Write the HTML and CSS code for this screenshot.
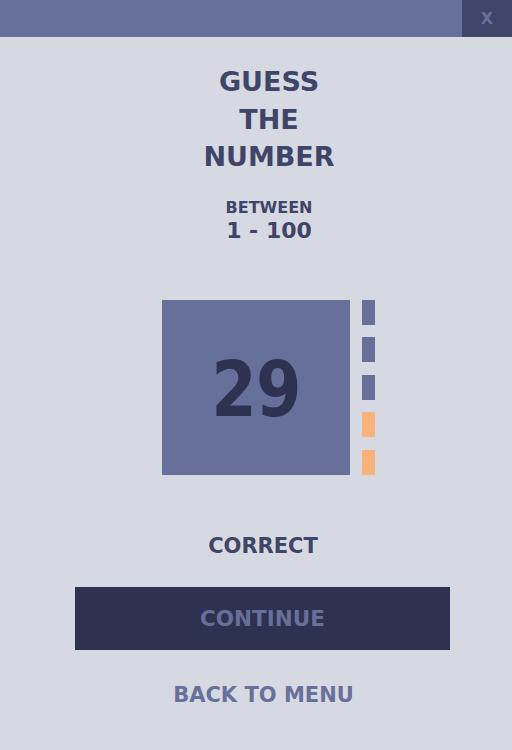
FILE: index.html
```html
<!DOCTYPE html>
<html>
<head>
<meta charset="utf-8">
<link rel="stylesheet" href="styles.css">
</head>
<body>
<div class="topbar">
  <div class="close">X</div>
</div>
<main class="content">
  <h1 class="title">GUESS<br>THE<br>NUMBER</h1>
  <div class="range">
    <div class="between">BETWEEN</div>
    <div class="nums">1 - 100</div>
  </div>
  <div class="game">
    <div class="numbox"><span class="digits">29</span></div>
    <div class="bars">
      <div class="bar"></div>
      <div class="bar"></div>
      <div class="bar"></div>
      <div class="bar hot"></div>
      <div class="bar hot"></div>
    </div>
  </div>
  <div class="status">CORRECT</div>
  <button class="continue">CONTINUE</button>
  <div class="back">BACK TO MENU</div>
</main>
</body>
</html>
```
FILE: styles.css
```css
* { box-sizing: border-box; }
html, body { margin: 0; padding: 0; }
body {
  width: 512px;
  height: 750px;
  background: #d6d9e1;
  font-family: "DejaVu Sans", Verdana, sans-serif;
  font-weight: bold;
  overflow: hidden;
}
.topbar {
  height: 37px;
  background: #67709a;
  display: flex;
  justify-content: flex-end;
}
.close {
  width: 50px;
  height: 37px;
  background: #3f4469;
  color: #67709a;
  font-size: 16px;
  display: flex;
  align-items: center;
  justify-content: center;
}
.content {
  display: flex;
  flex-direction: column;
  align-items: center;
}
.title {
  margin: 26px 0 0 26px;
  font-size: 27px;
  line-height: 37.5px;
  color: #3f4469;
  text-align: center;
}
.range {
  margin: 21px 0 0 26px;
  text-align: center;
  color: #3f4469;
}
.between { font-size: 16px; line-height: 21px; }
.nums { font-size: 22px; line-height: 26px; }
.game {
  margin: 56px 0 0 25px;
  display: flex;
  gap: 12px;
}
.numbox {
  width: 188px;
  height: 175px;
  padding-top: 4px;
  background: #67709a;
  color: #2d3250;
  font-size: 76px;
  display: flex;
  align-items: center;
  justify-content: center;
}
.digits {
  display: inline-block;
  transform: scaleX(0.86);
  letter-spacing: -1px;
}
.bars {
  display: flex;
  flex-direction: column;
  justify-content: space-between;
  width: 13px;
}
.bar { height: 25px; background: #67709a; }
.bar.hot { background: #f9b27a; }
.status {
  margin: 58px 0 0 14px;
  font-size: 21px;
  line-height: 26px;
  color: #3f4469;
}
.continue {
  margin: 28px 0 0 13px;
  width: 375px;
  height: 63px;
  border: none;
  background: #2d3250;
  color: #67709a;
  font-family: inherit;
  font-weight: bold;
  font-size: 21.5px;
}
.back {
  margin: 32px 0 0 15px;
  font-size: 21px;
  line-height: 26px;
  color: #67709a;
}
```
